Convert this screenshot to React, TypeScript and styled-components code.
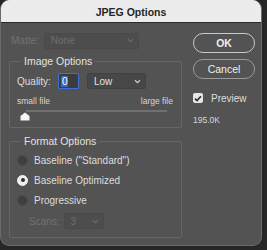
import React from "react";
import styled, { createGlobalStyle } from "styled-components";

const Global = createGlobalStyle`
  html, body { margin: 0; padding: 0; background: #262626; }
  body { font-family: "Liberation Sans", Arial, sans-serif; }
  * { box-sizing: border-box; }
`;

const Window = styled.div`
  width: 262px;
  height: 246px;
  background: #535353;
  border-radius: 9px;
  border: 1px solid #6b6b6b;
  border-top: none;
  overflow: hidden;
  display: flex;
  flex-direction: column;
`;

const TitleBar = styled.div`
  height: 23px;
  flex: none;
  background: #ececec;
  border-bottom: 1px solid #2b2b2b;
  display: flex;
  align-items: center;
  justify-content: center;
  font-weight: bold;
  font-size: 10.5px;
  color: #262626;
  padding-top: 1px;
`;

const Body = styled.div`
  display: flex;
  padding: 10px 0 0 7px;
`;

const LeftCol = styled.div`
  width: 174px;
  display: flex;
  flex-direction: column;
`;

const RightCol = styled.div`
  width: 62px;
  margin-left: 11px;
  display: flex;
  flex-direction: column;
`;

const Row = styled.div<{ $pl?: number; $mt?: number; $h?: number }>`
  display: flex;
  align-items: center;
  padding-left: ${(p) => p.$pl ?? 0}px;
  margin-top: ${(p) => p.$mt ?? 0}px;
  height: ${(p) => p.$h ?? 16}px;
`;

const Label = styled.span<{ $disabled?: boolean; $mr?: number }>`
  font-size: 10px;
  color: ${(p) => (p.$disabled ? "#727272" : "#dedede")};
  margin-right: ${(p) => p.$mr ?? 0}px;
  white-space: nowrap;
`;

const Select = styled.div<{ $w: number; $disabled?: boolean }>`
  width: ${(p) => p.$w}px;
  height: 16px;
  background: ${(p) => (p.$disabled ? "#4d4d4d" : "#474747")};
  border: 1px solid ${(p) => (p.$disabled ? "#4a4a4a" : "#414141")};
  border-radius: 2px;
  display: flex;
  align-items: center;
  justify-content: space-between;
  padding: 0 4px 0 6px;
  font-size: 10px;
  color: ${(p) => (p.$disabled ? "#6e6e6e" : "#e2e2e2")};
`;

const Chevron = ({ color }: { color: string }) => (
  <svg width="7" height="5" viewBox="0 0 7 5">
    <path d="M1 1.2 L3.5 3.6 L6 1.2" fill="none" stroke={color} strokeWidth="1.2" />
  </svg>
);

const Group = styled.div<{ $mt: number; $pb: number }>`
  margin: ${(p) => p.$mt + 6}px 0 0 1px;
  padding: 0 8px ${(p) => p.$pb}px 7px;
  border: 1px solid #666666;
  border-radius: 2px;
  display: flex;
  flex-direction: column;
`;

const Legend = styled.span`
  align-self: flex-start;
  margin: -7px 0 0 4px;
  padding: 0 3px;
  background: #535353;
  font-size: 10.5px;
  line-height: 12px;
  color: #e2e2e2;
`;

const NumInput = styled.div`
  width: 21px;
  height: 16px;
  background: #3c3c3c;
  border: 1.5px solid #3f6fd0;
  border-radius: 1px;
  display: flex;
  align-items: center;
  padding-left: 2px;
  margin-right: 8px;
`;

const Selected = styled.span`
  background: #3d68c2;
  color: #ffffff;
  font-size: 10px;
  line-height: 11px;
  padding: 0 1px;
`;

const SmallText = styled.span`
  font-size: 8.5px;
  color: #d6d6d6;
`;

const SizeRow = styled.div`
  display: flex;
  justify-content: space-between;
  margin-top: 6px;
  height: 11px;
  align-items: center;
`;

const Slider = styled.div`
  position: relative;
  margin: 3px 0 0 9px;
  width: 141px;
  height: 12px;
`;

const Track = styled.div`
  height: 2px;
  background: #707070;
  margin-top: 1px;
`;

const Thumb = styled.svg`
  position: absolute;
  left: -6px;
  top: 3px;
`;

const Radio = styled.span<{ $on?: boolean }>`
  width: 11px;
  height: 11px;
  border-radius: 50%;
  flex: none;
  margin-right: 6px;
  background: ${(p) => (p.$on ? "#eeeeee" : "#3f3f3f")};
  border: 1px solid ${(p) => (p.$on ? "#eeeeee" : "#4c4c4c")};
  display: flex;
  align-items: center;
  justify-content: center;
  &::after {
    content: "";
    width: 4px;
    height: 4px;
    border-radius: 50%;
    background: #2e2e2e;
    display: ${(p) => (p.$on ? "block" : "none")};
  }
`;

const Button = styled.div<{ $default?: boolean; $mt: number }>`
  height: 20px;
  margin-top: ${(p) => p.$mt}px;
  border-radius: 10px;
  border: ${(p) => (p.$default ? "1.5px solid #c9c9c9" : "1px solid #9a9a9a")};
  display: flex;
  align-items: center;
  justify-content: center;
  font-size: 10.5px;
  font-weight: ${(p) => (p.$default ? "bold" : "normal")};
  color: #f0f0f0;
`;

const Check = styled.span`
  width: 10px;
  height: 10px;
  border-radius: 2px;
  background: #e6e6e6;
  margin-right: 8px;
  display: flex;
  align-items: center;
  justify-content: center;
`;

export default function App() {
  return (
    <>
      <Global />
      <Window>
        <TitleBar>JPEG Options</TitleBar>
        <Body>
          <LeftCol>
            <Row $pl={3} $h={15}>
              <Label $disabled $mr={5}>Matte:</Label>
              <Select $w={95} $disabled>
                None
                <Chevron color="#6a6a6a" />
              </Select>
            </Row>
            <Group $mt={7} $pb={6}>
              <Legend>Image Options</Legend>
              <Row $mt={6}>
                <Label $mr={7}>Quality:</Label>
                <NumInput>
                  <Selected>0</Selected>
                </NumInput>
                <Select $w={59}>
                  Low
                  <Chevron color="#cfcfcf" />
                </Select>
              </Row>
              <SizeRow>
                <SmallText>small file</SmallText>
                <SmallText>large file</SmallText>
              </SizeRow>
              <Slider>
                <Track />
                <Thumb width="10" height="9" viewBox="0 0 10 9">
                  <path d="M5 0.5 L9.5 4 L9.5 8.5 L0.5 8.5 L0.5 4 Z" fill="#f4f4f4" />
                </Thumb>
              </Slider>
            </Group>
            <Group $mt={7} $pb={8}>
              <Legend>Format Options</Legend>
              <Row $mt={3} $h={20}>
                <Radio />
                <Label>Baseline ("Standard")</Label>
              </Row>
              <Row $h={20}>
                <Radio $on />
                <Label>Baseline Optimized</Label>
              </Row>
              <Row $h={20}>
                <Radio />
                <Label>Progressive</Label>
              </Row>
              <Row $pl={12} $mt={3}>
                <Label $disabled $mr={4}>Scans:</Label>
                <Select $w={40} $disabled>
                  3
                  <Chevron color="#6a6a6a" />
                </Select>
              </Row>
            </Group>
          </LeftCol>
          <RightCol>
            <Button $default $mt={0}>OK</Button>
            <Button $mt={6}>Cancel</Button>
            <Row $mt={12} $h={14}>
              <Check>
                <svg width="8" height="7" viewBox="0 0 8 7">
                  <path d="M1 3.6 L3 5.6 L7 1.2" fill="none" stroke="#2d2d2d" strokeWidth="1.6" />
                </svg>
              </Check>
              <Label>Preview</Label>
            </Row>
            <Row $mt={9} $h={11}>
              <SmallText>195.0K</SmallText>
            </Row>
          </RightCol>
        </Body>
      </Window>
    </>
  );
}
